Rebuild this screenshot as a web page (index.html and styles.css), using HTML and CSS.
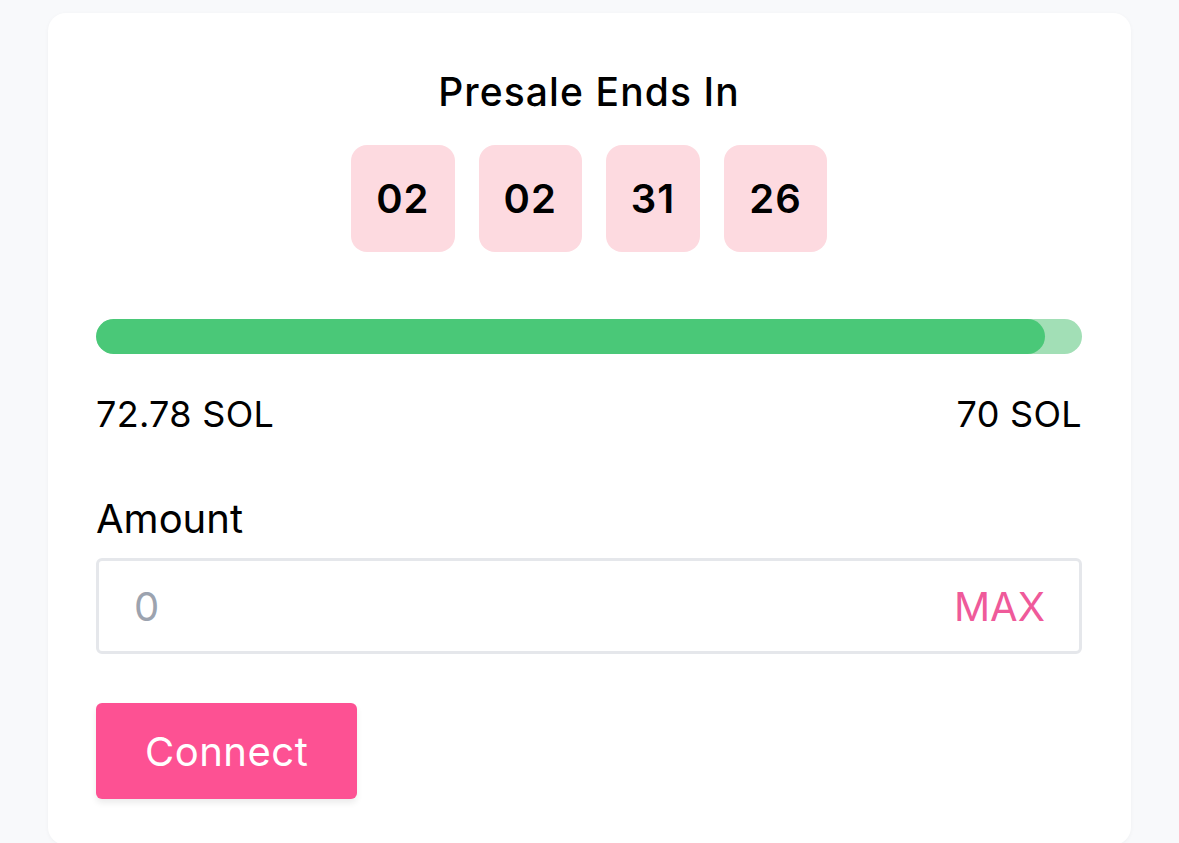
FILE: index.html
```html
<!DOCTYPE html>
<html>

<head>
	<title>Presale</title>
	<link rel="stylesheet" href="styles.css">
</head>

<body>

	<div class="card">

		<div class="title">Presale Ends In</div>

		<div class="countdown">
			<div class="time">02</div>
			<div class="time">02</div>
			<div class="time">31</div>
			<div class="time">26</div>
		</div>

		<div class="progress">
			<div class="bar" style="width: 96.25%"></div>
		</div>

		<div class="raised">
			<span>72.78 SOL</span>
			<span>70 SOL</span>
		</div>

		<div class="label">Amount</div>
		<div class="amount">
			<input class="amount_input" type="text" placeholder="0"/>
			<span class="max">MAX</span>
		</div>

		<button class="connect">Connect</button>

	</div>

</body>
</html>
```

FILE: styles.css
```css
body {
	margin: 0;
	background: #f8f9fb;
	font-family: Inter, "Noto Sans", sans-serif;
	color: #000;
}
.card {
	margin: 13px 0 0 48px;
	width: 1083px;
	height: 832px;
	box-sizing: border-box;
	padding: 56px 49px 0 48px;
	background: #fff;
	border-radius: 18px;
	box-shadow: 0 1px 4px rgba(0, 0, 0, 0.04);
}
.title {
	font-size: 39px;
	font-weight: 500;
	letter-spacing: 1.1px;
	text-align: center;
	line-height: 46px;
}
.countdown {
	display: flex;
	justify-content: center;
	gap: 24px;
	margin-top: 30px;
}
.time {
	height: 107px;
	padding: 0 25px;
	display: flex;
	align-items: center;
	background: #fddae0;
	border-radius: 16px;
	font-size: 40px;
	font-weight: 600;
	letter-spacing: 1px;
}
.progress {
	margin-top: 67px;
	height: 35px;
	border-radius: 18px;
	background: #a2dfb6;
	overflow: hidden;
}
.bar {
	height: 100%;
	border-radius: 18px;
	background: #4ac878;
}
.raised {
	display: flex;
	justify-content: space-between;
	margin-top: 40px;
	font-size: 36px;
	letter-spacing: 0.3px;
	line-height: 40px;
}
.label {
	margin-top: 61px;
	font-size: 40px;
	line-height: 48px;
}
.amount {
	margin-top: 15px;
	height: 96px;
	box-sizing: border-box;
	border: 3px solid #e5e7eb;
	border-radius: 6px;
	display: flex;
	align-items: center;
	padding: 0 34px 0 35px;
}
.amount_input {
	flex: 1;
	border: none;
	outline: none;
	font-family: Inter, "Noto Sans", sans-serif;
	font-size: 40px;
	padding: 0;
	background: transparent;
}
.amount_input::placeholder {
	color: #9ca3af;
}
.max {
	font-size: 40px;
	color: #ef5a9a;
}
.connect {
	display: block;
	margin-top: 49px;
	height: 96px;
	padding: 0 49px;
	border: none;
	border-radius: 6px;
	background: #fd5193;
	color: #fff;
	font-family: Inter, "Noto Sans", sans-serif;
	font-size: 40px;
	letter-spacing: 0.5px;
	box-shadow: 0 4px 6px rgba(0, 0, 0, 0.08);
	cursor: pointer;
}
```
